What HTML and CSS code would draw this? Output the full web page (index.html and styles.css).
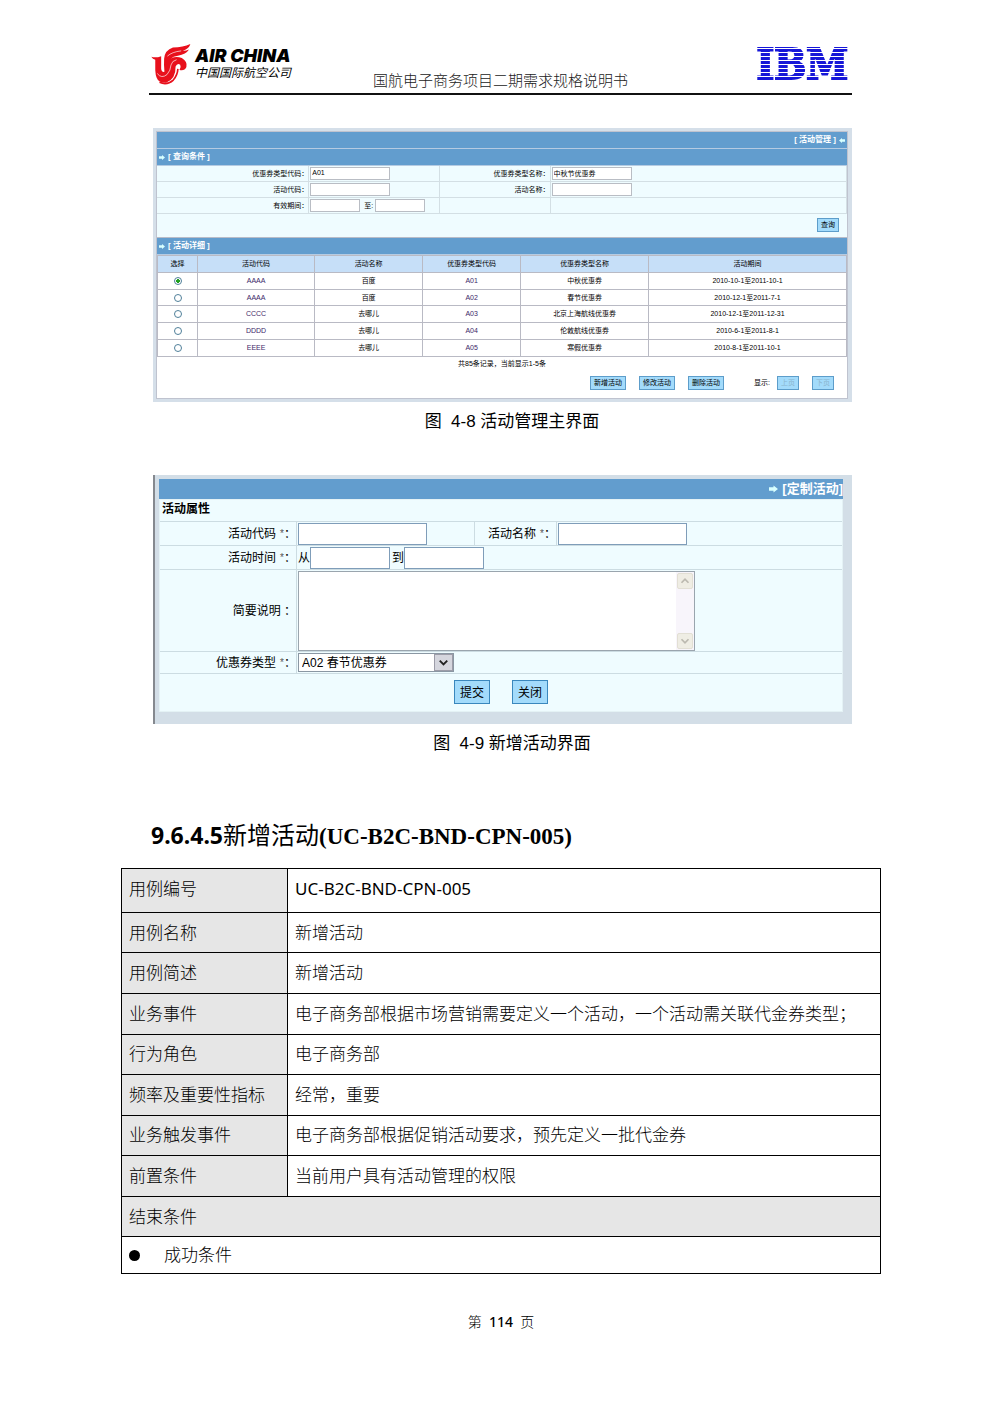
FILE: index.html
```html
<!DOCTYPE html>
<html lang="zh-Hans">
<head>
  <meta charset="UTF-8" />
  <title>国航电子商务项目二期需求规格说明书</title>
  <link rel="stylesheet" href="styles.css">
</head>
<body>
<div class="page">

  <!-- 页眉 -->
  <header class="page-header">
    <div class="airline">
      <svg class="phoenix" viewBox="34 28 122 124">
        <path fill="#e8101c" d="M35 68Q49 72 65 66V104Q66 116 75 114Q73 90 74 74Q76 48 101 40Q132 39 154 29Q151 43 131 50Q143 50 150 46Q141 61 116 65Q101 67 95 73Q111 65 128 72Q146 83 142 99Q136 112 121 108Q127 99 123 92Q114 86 109 98Q110 137 80 147Q57 148 51 131Q48 125 47 109V77Q39 75 35 68Z"/>
        <path fill="none" stroke="#e8101c" stroke-width="5" d="M60 146Q83 156 102 139Q115 124 116 105"/>
        <path fill="none" stroke="#fff" stroke-width="2" d="M84 66Q98 53 126 50M53 119Q66 136 83 122Q94 110 95 93Q98 80 112 77"/>
      </svg>
      <div class="airline-text">
        <span class="airline-en">AIR CHINA</span>
        <span class="airline-cn">中国国际航空公司</span>
      </div>
    </div>
    <div class="doc-title">国航电子商务项目二期需求规格说明书</div>
    <div class="ibm">IBM</div>
  </header>

  <!-- 活动管理主界面 -->
  <figure class="figure">
    <div class="manage">
      <div class="manage-inner">
        <div class="bar bar-right">[ 活动管理 ]
          <svg class="arrow-sm" viewBox="0 0 10 8"><path d="M10 2H5V0L0 4L5 8V6H10Z"/></svg>
        </div>
        <div class="bar">
          <svg class="arrow-sm" viewBox="0 0 10 8"><path d="M0 2H5V0L10 4L5 8V6H0Z"/></svg>
          [ 查询条件 ]
        </div>
        <form class="query">
          <div class="query-grid">
            <label for="qTypeCode">优惠券类型代码：</label>
            <div><input type="text" id="qTypeCode" value="A01" /></div>
            <label for="qTypeName">优惠券类型名称：</label>
            <div><input type="text" id="qTypeName" value="中秋节优惠券" /></div>
            <label for="qCode">活动代码：</label>
            <div><input type="text" id="qCode" /></div>
            <label for="qName">活动名称：</label>
            <div><input type="text" id="qName" /></div>
            <label for="qFrom">有效期间：</label>
            <div><input type="text" id="qFrom" class="date" /><label for="qTo">至:</label><input type="text" id="qTo" class="date" /></div>
            <div></div>
            <div></div>
          </div>
          <div class="query-actions"><button type="button" class="btn-sm">查询</button></div>
        </form>
        <div class="bar">
          <svg class="arrow-sm" viewBox="0 0 10 8"><path d="M0 2H5V0L10 4L5 8V6H0Z"/></svg>
          [ 活动详细 ]
        </div>
        <table class="list">
          <colgroup><col class="c1"><col class="c2"><col class="c3"><col class="c4"><col class="c5"><col></colgroup>
          <tr><th>选择</th><th>活动代码</th><th>活动名称</th><th>优惠券类型代码</th><th>优惠券类型名称</th><th>活动期间</th></tr>
          <tr><td><input type="radio" name="act" aria-label="A01" checked /></td><td class="code">AAAA</td><td>百度</td><td class="code">A01</td><td>中秋优惠券</td><td>2010-10-1至2011-10-1</td></tr>
          <tr><td><input type="radio" name="act" aria-label="A02" /></td><td class="code">AAAA</td><td>百度</td><td class="code">A02</td><td>春节优惠券</td><td>2010-12-1至2011-7-1</td></tr>
          <tr><td><input type="radio" name="act" aria-label="A03" /></td><td class="code">CCCC</td><td>去哪儿</td><td class="code">A03</td><td>北京上海航线优惠券</td><td>2010-12-1至2011-12-31</td></tr>
          <tr><td><input type="radio" name="act" aria-label="A04" /></td><td class="code">DDDD</td><td>去哪儿</td><td class="code">A04</td><td>伦敦航线优惠券</td><td>2010-6-1至2011-8-1</td></tr>
          <tr><td><input type="radio" name="act" aria-label="A05" /></td><td class="code">EEEE</td><td>去哪儿</td><td class="code">A05</td><td>寒假优惠券</td><td>2010-8-1至2011-10-1</td></tr>
        </table>
        <div class="record-count">共85条记录，当前显示1-5条</div>
        <div class="list-actions">
          <button type="button" class="btn-sm">新增活动</button>
          <button type="button" class="btn-sm">修改活动</button>
          <button type="button" class="btn-sm">删除活动</button>
          <span class="show">显示:</span>
          <button type="button" class="btn-sm" disabled>上页</button>
          <button type="button" class="btn-sm" disabled>下页</button>
        </div>
      </div>
    </div>
    <figcaption>图&nbsp; 4-8 活动管理主界面</figcaption>
  </figure>

  <!-- 新增活动界面 -->
  <figure class="figure figure-add">
    <div class="add">
      <div class="add-bar">
        <svg class="arrow" viewBox="0 0 10 8"><path d="M0 2H5V0L10 4L5 8V6H0Z"/></svg>
        [定制活动]
      </div>
      <form class="add-form">
        <div class="add-title">活动属性</div>
        <div class="add-row">
          <label for="aCode">活动代码 <i>*</i>：</label>
          <div class="field half"><input type="text" id="aCode" /></div>
          <label for="aName" class="second">活动名称 <i>*</i>：</label>
          <div class="field"><input type="text" id="aName" /></div>
        </div>
        <div class="add-row">
          <label for="aFrom">活动时间 <i>*</i>：</label>
          <div class="field">
            <span>从</span><input type="text" id="aFrom" class="date" />
            <label for="aTo" class="to">到</label><input type="text" id="aTo" class="date" />
          </div>
        </div>
        <div class="add-row tall">
          <label for="aDesc">简要说明 ：</label>
          <div class="field">
            <div class="memo">
              <textarea id="aDesc"></textarea>
              <div class="scroll">
                <svg viewBox="0 0 16 16"><path d="M4 10L8 6L12 10"/></svg>
                <svg viewBox="0 0 16 16"><path d="M4 6L8 10L12 6"/></svg>
              </div>
            </div>
          </div>
        </div>
        <div class="add-row short">
          <label for="aType">优惠券类型 <i>*</i>：</label>
          <div class="field">
            <div class="select-box">
              <select id="aType"><option>A02 春节优惠券</option></select>
              <svg viewBox="0 0 18 16"><path d="M5 6L9 10L13 6"/></svg>
            </div>
          </div>
        </div>
        <div class="add-actions">
          <button type="button" class="btn">提交</button>
          <button type="button" class="btn">关闭</button>
        </div>
      </form>
    </div>
    <figcaption>图&nbsp; 4-9 新增活动界面</figcaption>
  </figure>

  <!-- 用例说明 -->
  <h4><span class="num">9.6.4.5</span><span class="cn">新增活动</span>(UC-B2C-BND-CPN-005)</h4>

  <table class="usecase">
    <tr class="first"><th>用例编号</th><td>UC-B2C-BND-CPN-005</td></tr>
    <tr><th>用例名称</th><td>新增活动</td></tr>
    <tr><th>用例简述</th><td>新增活动</td></tr>
    <tr><th>业务事件</th><td>电子商务部根据市场营销需要定义一个活动，一个活动需关联代金券类型；</td></tr>
    <tr><th>行为角色</th><td>电子商务部</td></tr>
    <tr><th>频率及重要性指标</th><td>经常，重要</td></tr>
    <tr><th>业务触发事件</th><td>电子商务部根据促销活动要求，预先定义一批代金券</td></tr>
    <tr><th>前置条件</th><td>当前用户具有活动管理的权限</td></tr>
    <tr><th colspan="2">结束条件</th></tr>
    <tr class="last"><td colspan="2"><span class="dot"></span>成功条件</td></tr>
  </table>

  <footer>第&nbsp; <b>114</b> &nbsp;页</footer>
</div>
</body>
</html>
```
FILE: styles.css
```css
* {
  box-sizing: border-box;
}

body {
  margin: 0;
  background: #fff;
  color: #000;
  font-family: "Liberation Sans", "Noto Sans CJK SC", sans-serif;
}

.page {
  padding: 0 119px 0 121px;
}

input, select, textarea, button {
  margin: 0;
  font-family: inherit;
  border-radius: 0;
}

/* 页眉 */
.page-header {
  display: grid;
  grid-template-columns: 1fr auto 1fr;
  align-items: end;
  height: 95px;
  margin: 0 29px 0 28px;
  padding-bottom: 2px;
  border-bottom: 2px solid #111;
}

.airline {
  display: flex;
  align-items: center;
  padding: 0 0 6px 2px;
  gap: 4px;
}

.phoenix {
  width: 40px;
  height: 42px;
}

.airline-text {
  display: flex;
  flex-direction: column;
  white-space: nowrap;
}

.airline-en {
  font: italic 900 18px/18px Inter, sans-serif;
}

.airline-cn {
  font-size: 12px;
  line-height: 16px;
  font-style: italic;
}

.doc-title {
  font-size: 15px;
  line-height: 20px;
  font-weight: 300;
  color: #222;
}

.ibm {
  justify-self: end;
  margin: 0 4px 6px 0;
  font-family: "DejaVu Serif Condensed", "DejaVu Serif", serif;
  font-weight: bold;
  font-size: 42px;
  line-height: 40px;
  color: transparent;
  background: repeating-linear-gradient(#1616d8 0 3px, #fff 3px 4px);
  -webkit-background-clip: text;
  background-clip: text;
  -webkit-text-stroke: 2px transparent;
}

/* 图 */
.figure {
  margin: 33px 29px 0 32px;
}

.figure-add {
  margin-top: 40px;
}

figcaption {
  margin-top: 7px;
  padding-left: 19px;
  font-size: 17px;
  line-height: 26px;
  text-align: center;
}

/* 活动管理 */
.manage {
  padding: 3px 4px 3px 3px;
  background: #d5dfe9;
  font-size: 7px;
  line-height: 10px;
}

.manage-inner {
  background: #fff;
  border: 1px solid #bfc3cf;
}

.bar {
  display: flex;
  align-items: center;
  gap: 3px;
  height: 17px;
  padding: 0 2px;
  background: #629dce;
  border-bottom: 1px solid #b5cbe2;
  color: #fff;
  font-size: 8px;
  font-weight: bold;
}

.bar-right {
  justify-content: flex-end;
}

.arrow-sm {
  width: 6px;
  height: 5px;
  fill: #d8ffff;
}

.query {
  background: #effcff;
  border-bottom: 1px solid #b8bcc8;
}

.query-grid {
  display: grid;
  grid-template-columns: 152fr 131fr 110fr 296fr;
  grid-auto-rows: 16px;
}

.query-grid > * {
  display: flex;
  align-items: center;
  border-bottom: 1px solid #d3dfe4;
  border-right: 1px solid #d3dfe4;
}

.query-grid > label {
  justify-content: flex-end;
}

.query-grid input {
  width: 80px;
  height: 13px;
  margin-left: 1px;
  padding: 0 1px 2px;
  border: 1px solid #b9bdc4;
  background: #fff;
  font-size: 7px;
}

.query-grid input.date {
  width: 50px;
}

.query-grid div label {
  padding: 0 1px 0 4px;
}

.query-actions {
  display: flex;
  justify-content: flex-end;
  padding: 4px 8px 5px;
}

.btn-sm {
  height: 14px;
  min-width: 22px;
  padding: 0 3px;
  border: 1px solid #5d9dca;
  background: #a3dbfb;
  font-size: 7px;
  line-height: 10px;
  color: #000;
}

.btn-sm:disabled {
  color: #8ab4cc;
}

.list {
  width: 100%;
  height: 102px;
  table-layout: fixed;
  border-collapse: collapse;
  border: 1px solid #c4c4cb;
}

.list .c1 { width: 40px; }
.list .c2 { width: 17%; }
.list .c3 { width: 108px; }
.list .c4 { width: 98px; }
.list .c5 { width: 128px; }

.list th, .list td {
  padding: 0;
  border: 1px solid #b9bac4;
  text-align: center;
  font-weight: normal;
}

.list th {
  background: #c6dff8;
}

.list .code {
  color: #3c2868;
}

.list input {
  display: block;
  appearance: none;
  width: 8px;
  height: 8px;
  margin: 0 auto;
  border: 1px solid #50809a;
  border-radius: 50%;
  background: #fff;
}

.list input:checked {
  background: radial-gradient(#20a020 0 2px, #fff 2px);
}

.record-count {
  padding-top: 2px;
  text-align: center;
}

.list-actions {
  display: flex;
  justify-content: flex-end;
  align-items: center;
  gap: 13px;
  padding: 7px 13px 8px;
}

.show {
  margin-left: 17px;
  margin-right: -6px;
}

/* 新增活动 */
.add {
  padding: 4px 9px 12px 4px;
  border-left: 2px solid #85898f;
  background: #d3dee7;
  font-size: 12px;
  line-height: 16px;
}

.add-bar {
  display: flex;
  justify-content: flex-end;
  align-items: center;
  gap: 4px;
  height: 20px;
  background: #629dce;
  color: #fff;
  font-size: 13px;
  font-weight: bold;
}

.arrow {
  width: 9px;
  height: 8px;
  fill: #d8ffff;
}

.add-form {
  background: #effcff;
  border: 1px solid #e4f2f5;
}

.add-title {
  height: 22px;
  padding: 1px 2px;
  border-bottom: 1px solid #ccdce2;
  font-weight: bold;
}

.add-row {
  display: flex;
  height: 24px;
  border-bottom: 1px solid #ccdce2;
}

.add-row > label {
  display: flex;
  flex: none;
  align-items: center;
  justify-content: flex-end;
  width: 137px;
  border-right: 1px solid #ccdce2;
}

.add-row i {
  margin: 0 0 0 4px;
  font-style: normal;
  font-size: 10px;
  color: #555;
}

.add-row > .second {
  width: 82px;
}

.field {
  display: flex;
  align-items: center;
  padding-left: 1px;
}

.half {
  width: 178px;
  border-right: 1px solid #ccdce2;
}

.field input {
  width: 129px;
  height: 22px;
  border: 1px solid #7f9db9;
  background: #fff;
  font-size: 12px;
}

.field input.date {
  width: 80px;
}

.to {
  padding-left: 2px;
}

.tall {
  height: 82px;
}

.memo {
  display: flex;
  width: 397px;
  height: 80px;
  border: 1px solid #9aa5ae;
}

.memo textarea {
  flex: 1;
  border: 0;
  resize: none;
  background: #fff;
}

.scroll {
  display: flex;
  flex-direction: column;
  justify-content: space-between;
  width: 18px;
  padding: 1px;
  background: #f8f5fb;
}

.scroll svg {
  width: 16px;
  height: 16px;
  background: #efede4;
  border: 1px solid #e2dfd4;
  border-radius: 2px;
}

.scroll path {
  fill: none;
  stroke: #bcb9b0;
  stroke-width: 2;
}

.short {
  height: 22px;
}

.select-box {
  display: flex;
  align-items: center;
  width: 156px;
  height: 19px;
  border: 1px solid #8a97a3;
  background: #fff;
}

.select-box select {
  flex: 1;
  appearance: none;
  border: 0;
  padding: 0 3px;
  background: #fff;
  font-size: 12px;
  color: #000;
}

.select-box svg {
  width: 19px;
  height: 17px;
  background: #d5d6de;
  border: 1px solid #9c9ca8;
  pointer-events: none;
}

.select-box path {
  fill: none;
  stroke: #222;
  stroke-width: 2;
}

.add-actions {
  display: flex;
  justify-content: center;
  gap: 22px;
  padding: 6px 0 7px;
}

.btn {
  width: 36px;
  height: 24px;
  padding: 0 0 2px;
  border: 1px solid #3a87bd;
  background: #a3dbfb;
  font-size: 12px;
  color: #000;
}

/* 用例说明 */
h4 {
  margin: 59px 0 13px 30px;
  font: bold 23px/36px "Liberation Serif", "Noto Sans CJK SC", serif;
}

h4 .num {
  font-family: "Noto Sans", sans-serif;
}

h4 .cn {
  font-family: "Noto Sans CJK SC", sans-serif;
  font-size: 24px;
  font-weight: normal;
}

.usecase {
  width: 100%;
  height: 406px;
  border-collapse: collapse;
  font-family: "Noto Sans", "Noto Sans CJK SC", sans-serif;
  font-size: 17px;
  line-height: 24px;
}

.usecase th, .usecase td {
  padding: 7px;
  border: 1px solid #000;
  text-align: left;
  font-weight: 300;
}

.usecase th {
  width: 166px;
  background: #e6e6e6;
}

.usecase td {
  padding-right: 0;
}

.usecase .first td {
  font-weight: normal;
}

.usecase .first th, .usecase .first td {
  padding-bottom: 10px;
}

.usecase .last td {
  padding: 5px 7px;
}

.dot {
  display: inline-block;
  width: 11px;
  height: 11px;
  margin-right: 24px;
  border-radius: 50%;
  background: #000;
}

footer {
  margin-top: 38px;
  text-align: center;
  font-family: "Noto Sans", "Noto Sans CJK SC", sans-serif;
  font-size: 14px;
  line-height: 20px;
  font-weight: 300;
}

footer b {
  font-weight: 500;
}
```
